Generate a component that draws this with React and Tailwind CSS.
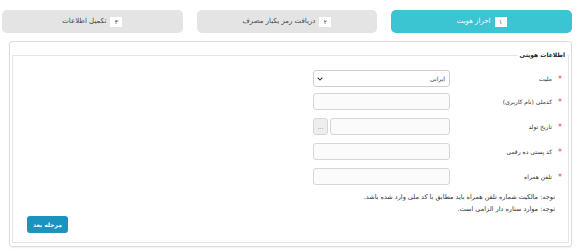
import { FaChevronDown } from "react-icons/fa";

const steps = [
  { num: "۱", label: "احراز هویت", active: true },
  { num: "۲", label: "دریافت رمز یکبار مصرف" },
  { num: "۳", label: "تکمیل اطلاعات" },
];

const Field = ({ label, children, first }) => (
  <div className={`flex h-[17px] items-center pr-[5px] ${first ? "" : "mt-[8px]"}`}>
    <span className="w-[6px] pt-[3px] text-center text-[8px] leading-none text-[#e0446a]">
      *
    </span>
    <span className="w-[107px] pr-[5px] text-[6px] text-[#333]">{label}</span>
    <div className="flex h-[17px] w-[137px] gap-[2px]">{children}</div>
  </div>
);

const TextBox = () => (
  <div className="h-full flex-1 rounded-[3px] border border-[#d6d6d6] bg-[#fbfbfb]" />
);

export default function App() {
  return (
    <div
      dir="rtl"
      className="h-[252px] w-[580px] bg-white font-['DejaVu_Sans',sans-serif] text-[8px] text-[#333]"
    >
      {/* Steps */}
      <div className="flex gap-[14px] pl-[2px] pr-[8px] pt-[10px]">
        {steps.map((s) => (
          <div
            key={s.num}
            className={`flex h-[23px] flex-1 items-center justify-center gap-[4px] rounded-[5px] ${
              s.active ? "bg-[#3bc4d1] text-white" : "bg-[#e4e4e4] text-[#444]"
            }`}
          >
            <span className="flex h-[10px] w-[12px] items-center justify-center bg-white text-[6px] text-[#333]">
              {s.num}
            </span>
            <span className="text-[7px]">{s.label}</span>
          </div>
        ))}
      </div>

      {/* Panel */}
      <div className="ml-[9px] mr-[8px] mt-[8px] rounded-[3px] border border-[#dcdcdc] px-[2px] pb-[3px] shadow-[0_1px_2px_rgba(0,0,0,0.06)]">
        <fieldset className="mt-[7px] border border-[#e6e6e6] pb-[9px]">
          <legend className="mr-[1px] px-[2px] text-[6px] font-bold leading-[12px] text-[#222]">
            اطلاعات هویتی
          </legend>

          <div className="mt-[9px]">
            <Field label="ملیت" first>
              <div className="flex h-full flex-1 items-center justify-between rounded-[3px] border border-[#cfcfcf] bg-white pl-[3px] pr-[4px]">
                <span className="text-[6px] text-[#444]">ایرانی</span>
                <FaChevronDown className="text-[6px] text-[#333]" />
              </div>
            </Field>
            <div className="mt-[-2px]" />
            <Field label="کدملی (نام کاربری)">
              <TextBox />
            </Field>
            <Field label="تاریخ تولد">
              <TextBox />
              <div className="flex h-full w-[15px] items-center justify-center rounded-[3px] border border-[#d6d6d6] bg-[#eeeeee] text-[6px] text-[#777]">
                ...
              </div>
            </Field>
            <Field label="کد پستی ده رقمی">
              <TextBox />
            </Field>
            <Field label="تلفن همراه">
              <TextBox />
            </Field>
          </div>

          <div className="mr-[13px] mt-[6px] text-[6.5px] leading-[12px] text-[#333]">
            <p>توجه: مالکیت شماره تلفن همراه باید مطابق با کد ملی وارد شده باشد.</p>
            <p>توجه: موارد ستاره دار الزامی است.</p>
          </div>

          <div className="flex justify-end pl-[14px]">
            <button className="mt-[1px] flex h-[17px] w-[41px] items-center justify-center rounded-[3px] bg-[#1a93bf] text-[6px] font-bold text-white">
              مرحله بعد
            </button>
          </div>
        </fieldset>
      </div>
    </div>
  );
}
